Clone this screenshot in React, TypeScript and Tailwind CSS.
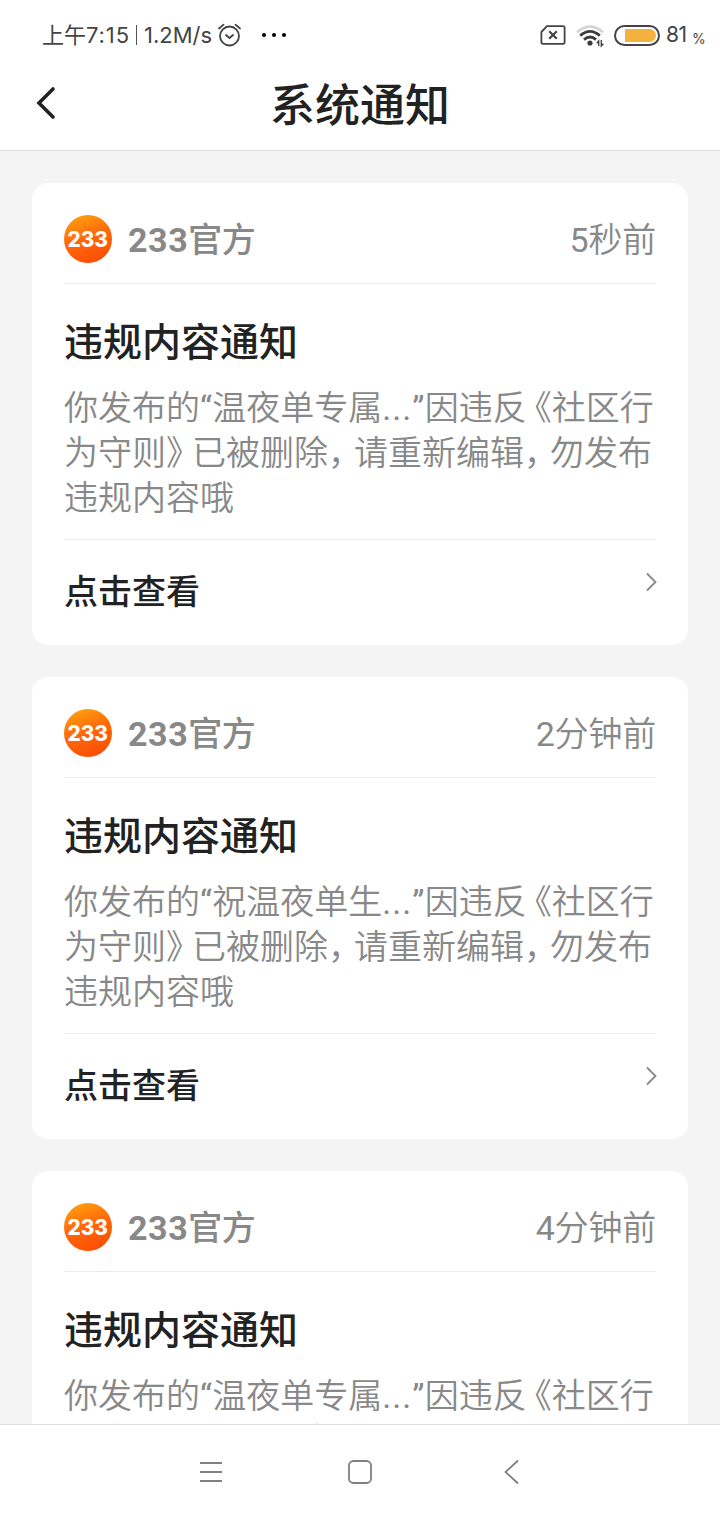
import type { ReactNode } from "react";

const NOTICES = [
  { id: 1, time: "5秒前", post: "温夜单专属" },
  { id: 2, time: "2分钟前", post: "祝温夜单生" },
  { id: 3, time: "4分钟前", post: "温夜单专属" },
];

export default function App() {
  return (
    <div className="flex h-[1520px] w-[720px] flex-col overflow-hidden bg-[#f4f4f4] font-['Roboto','Noto_Sans_CJK_SC',sans-serif]">
      <StatusBar />
      <Header />
      <main className="flex min-h-0 flex-1 flex-col gap-8 overflow-hidden px-8 pt-8">
        {NOTICES.map((n) => (
          <NoticeCard key={n.id} time={n.time} post={n.post} />
        ))}
      </main>
      <NavBar />
    </div>
  );
}

function StatusBar() {
  return (
    <div className="flex h-[70px] shrink-0 items-center justify-between bg-white pr-[17px] pl-[42px] font-['Inter','Noto_Sans_CJK_SC',sans-serif] text-[#444]">
      <div className="flex items-center whitespace-nowrap">
        <span className="w-[88px] text-[22px] leading-8">
          上午<span className="tracking-[0.9px]">7:15</span>
        </span>
        <span className="mr-[7px] ml-[6px] h-5 w-px bg-[#555]" />
        <span className="w-[70px] text-[22px] leading-8">1.2M/s</span>
        {/* alarm */}
        <svg className="ml-[3px]" width="26" height="26" viewBox="0 0 26 26" fill="none" stroke="#444" strokeWidth="1.8" strokeLinecap="round">
          <circle cx="12.5" cy="14" r="9.5" />
          <path d="M2 6.5 6.5 2.6M18.5 2.6l4.5 3.9M9 13l3.5 3 3.5-3" />
        </svg>
        <div className="ml-[19px] flex gap-1.5">
          <i className="size-1 rounded-full bg-black" />
          <i className="size-1 rounded-full bg-black" />
          <i className="size-1 rounded-full bg-black" />
        </div>
      </div>
      <div className="flex items-center">
        {/* no sim */}
        <svg width="26" height="20" viewBox="0 0 26 20" fill="none" stroke="#444" strokeWidth="1.8">
          <path d="M7 1.2h16q1.6 0 1.6 1.6v14.4q0 1.6-1.6 1.6H3q-1.6 0-1.6-1.6V7z" strokeLinejoin="round" />
          <path d="m9.2 6.2 7.6 7.6m0-7.6-7.6 7.6" strokeWidth="2.2" />
        </svg>
        {/* wifi */}
        <svg className="mt-0.5 ml-[10px]" width="28" height="24" viewBox="0 0 28 24" fill="none">
          <path d="M1 8.2Q14 -2.8 27 8.2" stroke="#d4d4d4" strokeWidth="2.6" />
          <path d="M4.2 11.6q9.8-8.4 19.6 0" stroke="#3c3c3c" strokeWidth="2.8" />
          <path d="M8 15.6q6-5.2 12 0" stroke="#3c3c3c" strokeWidth="2.8" />
          <circle cx="14" cy="19" r="2.6" fill="#3c3c3c" />
          <path d="M22.7 22v-5l-2 2.2M25.3 16v6l2-2.2" stroke="#3c3c3c" strokeWidth="1.3" />
        </svg>
        <div className="ml-[10px] flex h-[21px] w-[46px] items-center rounded-full border-2 border-[#444] pl-[9px]">
          <div className="h-[13px] w-[31px] rounded-r-full bg-[#f4b13e]" />
        </div>
        <span className="ml-[6px] w-[26px] text-[21px] leading-8 tracking-[-0.5px]">81</span>
        <span className="mt-2 -mr-px w-3 text-[14px] leading-5">%</span>
      </div>
    </div>
  );
}

function Header() {
  return (
    <header className="grid h-[81px] shrink-0 grid-cols-[80px_1fr_80px] border-b border-[#dedede] bg-white">
      <svg className="mt-[16px] ml-[34px]" width="24" height="34" viewBox="0 0 24 34" fill="none" stroke="#222" strokeWidth="3.6" strokeLinecap="round" strokeLinejoin="miter">
        <path d="M19 3 5 17l14 14" />
      </svg>
      <h1 className="mt-[7px] text-center text-[45px] leading-[60px] font-medium text-[#222]">系统通知</h1>
    </header>
  );
}

function NoticeCard({ time, post }: { time: string; post: string }) {
  return (
    <section className="h-[462px] shrink-0 rounded-2xl bg-white px-8">
      <div className="flex h-[101px] border-b border-[#ededed] pt-8 text-[#888]">
        <Logo />
        <span className="mt-px ml-4 flex-1 text-[34px] leading-[48px] font-bold tracking-[0.6px]">
          233<span className="font-medium tracking-[-0.5px]">官方</span>
        </span>
        <span className="mt-px text-[34px] leading-[48px] tracking-[-0.2px]">
          {time.charAt(0)}
          <span className="font-[350]">{time.slice(1)}</span>
        </span>
      </div>
      <h2 className="mt-[33px] text-[39px] leading-[52px] font-medium text-[#222]">违规内容通知</h2>
      <p className="mt-[17px] text-[34px] leading-[45px] font-[350] whitespace-nowrap text-[#888]">
        你发布的<Quote>“</Quote>
        {post}
        <span className="font-normal tracking-[1px]">...</span>
        <Quote>”</Quote>因违反<Open>《</Open>社区行
        <br />
        为守则<Close>》</Close>已被删除<Close>，</Close>请重新编辑<Close>，</Close>勿发布
        <br />
        违规内容哦
      </p>
      <div className="mt-[18px] flex justify-between border-t border-[#ededed]">
        <span className="mt-[27px] text-[34px] leading-[50px] font-medium text-[#222]">点击查看</span>
        <svg className="mt-[32px] -mr-px" width="12" height="20" viewBox="0 0 12 20" fill="none" stroke="#888" strokeWidth="1.8" strokeLinecap="round">
          <path d="m2.5 2 8 8-8 8" />
        </svg>
      </div>
    </section>
  );
}

function Quote({ children }: { children: ReactNode }) {
  return <span className="font-normal tracking-[0.3px]">{children}</span>;
}

// half-width punctuation with a little air on its open side
function Open({ children }: { children: ReactNode }) {
  return <span className="ml-[8px] [font-feature-settings:'halt']">{children}</span>;
}

function Close({ children }: { children: ReactNode }) {
  return <span className="mr-[9px] [font-feature-settings:'halt']">{children}</span>;
}

function Logo() {
  return (
    <div className="size-12 rounded-full bg-linear-160 from-[#ffa810] via-[#ff6a0a] via-45% to-[#fb4505]">
      <svg width="48" height="48" viewBox="0 0 48 48">
        <text x="3.5" y="31.5" textLength="40.5" lengthAdjust="spacingAndGlyphs" fill="#fff" fontFamily="Inter, sans-serif" fontWeight="800" fontSize="21">
          233
        </text>
      </svg>
    </div>
  );
}

function NavBar() {
  return (
    <nav className="flex h-24 shrink-0 items-center justify-center gap-[127px] border-t border-[#dedede] bg-white pb-0.5">
      <svg width="24" height="24" viewBox="0 0 24 24" fill="none" stroke="#808080" strokeWidth="1.8" className="overflow-visible">
        <path d="M3 3h22M3 12h22M3 21h22" />
      </svg>
      <svg width="24" height="24" viewBox="0 0 24 24" fill="none" stroke="#808080" strokeWidth="1.8">
        <rect x="1" y="1" width="22" height="22" rx="4.5" />
      </svg>
      <svg width="24" height="24" viewBox="0 0 24 24" fill="none" stroke="#808080" strokeWidth="1.8" strokeLinecap="round">
        <path d="M18.5 1 6.5 12l12 11" />
      </svg>
    </nav>
  );
}
